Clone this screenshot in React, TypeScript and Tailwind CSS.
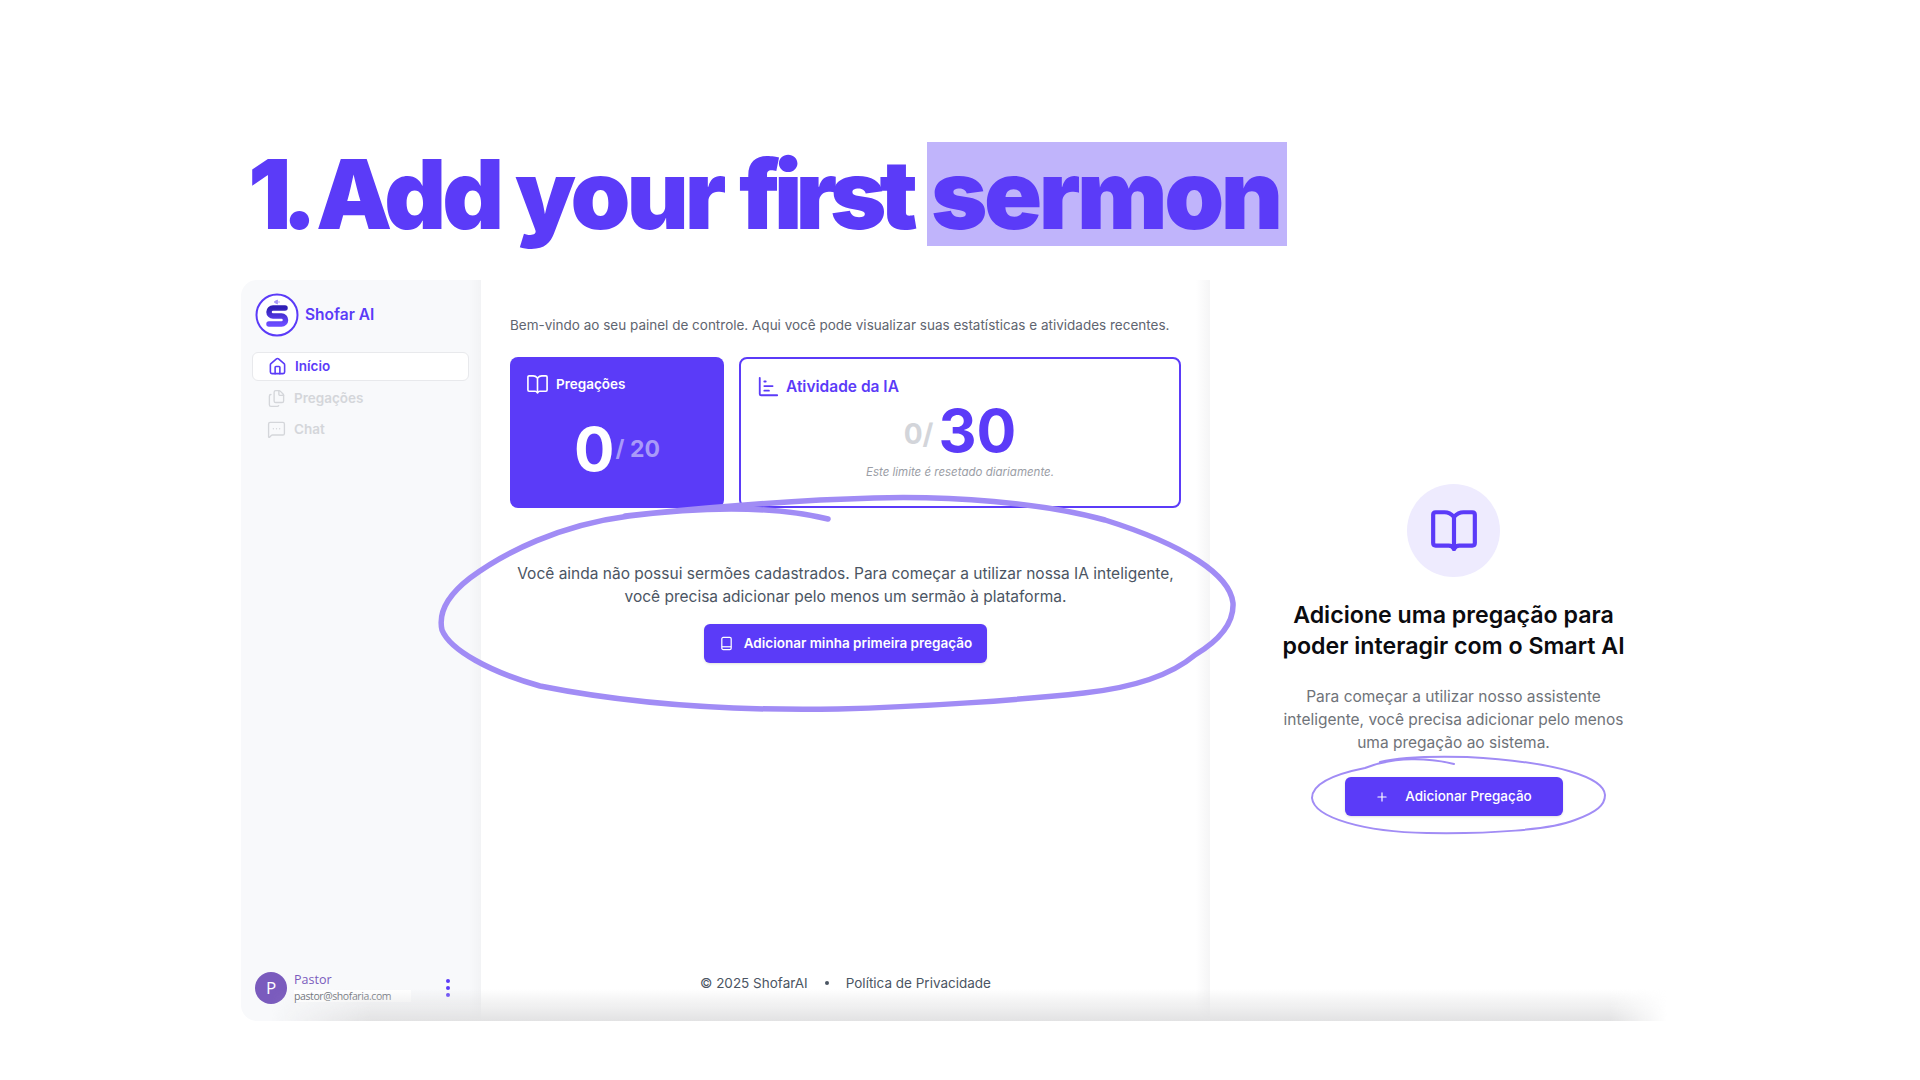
import React from 'react';
import { House, Files, MessageSquareMore, Plus } from 'lucide-react';

const BookIcon: React.FC<{ className?: string; strokeWidth?: number }> = ({ className, strokeWidth = 2 }) => (
  <svg viewBox="0 0 24 24" fill="none" stroke="currentColor" strokeWidth={strokeWidth} strokeLinejoin="round" strokeLinecap="round" className={className}>
    <path d="M12 5.2C10.8 3.9 9.2 3 7.5 3H3.2C2.5 3 2 3.5 2 4.2v13.6c0 .7.5 1.2 1.2 1.2h6.3c1 0 1.9.5 2.5 1.6.6-1.1 1.5-1.6 2.5-1.6h6.3c.7 0 1.2-.5 1.2-1.2V4.2C22 3.5 21.5 3 20.8 3h-4.3c-1.7 0-3.3.9-4.5 2.2Z" />
    <path d="M12 5.2V20.6" />
  </svg>
);

const ChartIcon: React.FC = () => (
  <svg viewBox="0 0 24 24" fill="none" stroke="currentColor" strokeWidth={2} strokeLinecap="round" strokeLinejoin="round" className="h-[22px] w-[22px]">
    <path d="M3 2v17.5A1.5 1.5 0 0 0 4.5 21H22" />
    <path d="M8 6h1.5M8 11h9M8 16h5" />
  </svg>
);

const Logo: React.FC = () => (
  <svg viewBox="0 0 44 44" className="h-[44px] w-[44px] shrink-0">
    <defs>
      <linearGradient id="logoS" x1="0" y1="0" x2="0" y2="1">
        <stop offset="0" stopColor="#2f1fb5" />
        <stop offset="1" stopColor="#6a4bff" />
      </linearGradient>
    </defs>
    <circle cx="22" cy="22" r="20.5" fill="#fff" stroke="#5b3bf8" strokeWidth="2" />
    <path d="M30 15H18a4 4 0 0 0 0 8h8.5a4 4 0 0 1 0 8H14" fill="none" stroke="url(#logoS)" strokeWidth="5.5" strokeLinecap="round" strokeLinejoin="round" />
    <path d="M19.5 8.5l3-1.5v4l-3-1.5zM24 8v2" fill="#a594f9" stroke="#a594f9" strokeWidth="0.8" />
  </svg>
);

const Sidebar: React.FC = () => (
  <aside className="relative flex w-[240px] shrink-0 flex-col rounded-l-2xl bg-[#f8f9fb] pl-[11px] pr-[12px] pt-[13px]">
    <div className="absolute bottom-0 right-0 top-0 w-[12px] bg-gradient-to-r from-transparent to-[#f2f3f5]" />
    <div className="relative flex items-center gap-[6px] pl-[3px]">
      <Logo />
      <span className="text-[15.5px] font-semibold text-[#5b3bf8]">Shofar AI</span>
    </div>
    <nav className="relative mt-[15px] flex flex-col text-[13.5px] font-semibold">
      <a className="flex h-[29px] items-center gap-[8px] rounded-md border border-[#e8e9ec] bg-white pl-[15px] text-[#5b3bf8]">
        <House className="h-[19px] w-[19px]" strokeWidth={2} />
        Início
      </a>
      <a className="mt-[3px] flex h-[29px] items-center gap-[8px] pl-[15px] text-[#d4d6da]">
        <Files className="h-[19px] w-[19px]" strokeWidth={1.7} />
        Pregações
      </a>
      <a className="mt-[2px] flex h-[29px] items-center gap-[8px] pl-[15px] text-[#d4d6da]">
        <MessageSquareMore className="h-[19px] w-[19px]" strokeWidth={1.7} />
        Chat
      </a>
    </nav>
    <div className="relative mt-auto flex items-center pb-[17px] pl-[3px]">
      <div className="flex h-[32px] w-[32px] shrink-0 items-center justify-center rounded-full bg-[#7a5bbd] font-['Open_Sans',sans-serif] text-[17px] text-white">
        P
      </div>
      <div className="ml-[7px] w-[117px] font-['Open_Sans',sans-serif] leading-none">
        <div className="text-[12.5px] text-[#7a5bbd]">Pastor</div>
        <div className="mt-[3px] bg-white py-[1px] text-[10.5px] tracking-[-0.4px] text-[#6b6f76]">pastor@shofaria.com</div>
      </div>
      <div className="ml-[35px] flex flex-col gap-[3px]">
        <span className="h-[4px] w-[4px] rounded-full bg-[#5b3bf8]" />
        <span className="h-[4px] w-[4px] rounded-full bg-[#5b3bf8]" />
        <span className="h-[4px] w-[4px] rounded-full bg-[#5b3bf8]" />
      </div>
    </div>
  </aside>
);

const MainPanel: React.FC = () => (
  <main className="relative flex w-[729px] shrink-0 flex-col pl-[29px] pr-[29px] pt-[36px]">
    <div className="absolute bottom-0 right-0 top-0 w-[14px] bg-gradient-to-r from-transparent to-[#f5f5f6]" />
    <p className="text-[13.5px] leading-[18px] text-[#5f6570]">
      Bem-vindo ao seu painel de controle. Aqui você pode visualizar suas estatísticas e atividades recentes.
    </p>
    <div className="mt-[23px] flex h-[151px] gap-[15px]">
      <div className="flex w-[214px] flex-col rounded-lg bg-[#5b3bf8] px-[16px] pt-[16px] text-white">
        <div className="flex items-center gap-[7px] text-[13.5px] font-semibold">
          <BookIcon className="h-[23px] w-[23px]" strokeWidth={1.7} />
          Pregações
        </div>
        <div className="mt-[17px] flex items-center justify-center">
          <span className="text-[60px] font-bold leading-[72px]">0</span>
          <span className="ml-[1px] text-[23px] font-bold text-[#a99af9]">/ 20</span>
        </div>
      </div>
      <div className="flex flex-1 flex-col rounded-lg border-2 border-[#5b3bf8] bg-white px-[16px] pt-[16px]">
        <div className="flex items-center gap-[7px] text-[15.5px] font-semibold text-[#5b3bf8]">
          <ChartIcon />
          Atividade da IA
        </div>
        <div className="flex items-center justify-center">
          <span className="mt-[6px] text-[28px] font-bold leading-[32px] text-[#d3d5da]">0/</span>
          <span className="ml-[5px] text-[59px] font-bold leading-[66px] text-[#5b3bf8]">30</span>
        </div>
        <p className="text-center text-[11.5px] italic leading-[16px] text-[#9b9ea6]">Este limite é resetado diariamente.</p>
      </div>
    </div>
    <div className="mt-[54px] flex flex-col items-center">
      <p className="text-center text-[15.5px] leading-[23px] text-[#4b5563]">
        Você ainda não possui sermões cadastrados. Para começar a utilizar nossa IA inteligente,
        <br />
        você precisa adicionar pelo menos um sermão à plataforma.
      </p>
      <button className="mt-[16px] flex h-[39px] w-[283px] items-center justify-center gap-[10px] rounded-md bg-[#5b3bf8] text-[13.5px] font-semibold text-white shadow-sm">
        <svg viewBox="0 0 16 16" fill="none" stroke="currentColor" strokeWidth={1.3} className="h-[15px] w-[15px]">
          <rect x="3" y="1.5" width="10" height="13" rx="1.5" />
          <path d="M3 11.5h10" />
        </svg>
        Adicionar minha primeira pregação
      </button>
    </div>
    <footer className="mt-auto flex items-center justify-center pb-[29px] text-[13.5px] leading-[18px] text-[#4b5563]">
      <span>© 2025 ShofarAI</span>
      <span className="mx-[17px] h-[4px] w-[4px] rounded-full bg-[#4b5563]" />
      <span>Política de Privacidade</span>
    </footer>
  </main>
);

const RightPanel: React.FC = () => (
  <section className="flex w-[457px] shrink-0 flex-col items-center pl-[30px] pt-[204px]">
    <div className="flex h-[93px] w-[93px] items-center justify-center rounded-full bg-[#eeebfe] text-[#5b3bf8]">
      <BookIcon className="h-[50px] w-[50px]" strokeWidth={2} />
    </div>
    <h2 className="mt-[23px] text-center text-[23.2px] font-semibold leading-[31px] text-[#0b0b0f]">
      Adicione uma pregação para
      <br />
      poder interagir com o Smart AI
    </h2>
    <p className="mt-[23px] text-center text-[15.5px] leading-[23px] text-[#6f7379]">
      Para começar a utilizar nosso assistente
      <br />
      inteligente, você precisa adicionar pelo menos
      <br />
      uma pregação ao sistema.
    </p>
    <button className="mt-[23px] flex h-[39px] w-[218px] items-center justify-center gap-[16px] rounded-md bg-[#5b3bf8] text-[13.5px] font-medium text-white shadow-sm">
      <Plus className="h-[14px] w-[14px]" strokeWidth={2} />
      Adicionar Pregação
    </button>
  </section>
);

const Scribbles: React.FC = () => (
  <svg viewBox="0 0 1920 1080" fill="none" stroke="#a18cf5" strokeLinecap="round" className="pointer-events-none absolute left-0 top-0 h-[1080px] w-[1920px]">
    <path
      strokeWidth="5.5"
      d="M828 519C770 505 700 507 629 516C560 525 505 552 470 578C448 595 438 612 442 630C450 650 490 672 540 686C630 704 730 711 838 709C920 707 1020 700 1084 693C1130 688 1170 676 1195 655C1220 640 1234 622 1233 603C1230 575 1185 545 1105 520C1040 502 950 496 874 498C800 500 700 508 625 516"
    />
    <path
      strokeWidth="2"
      d="M1454 764C1430 758 1395 756 1365 768C1330 775 1312 785 1312 798C1314 818 1365 832 1427 833C1490 834 1550 830 1575 820C1597 812 1605 805 1605 795C1604 778 1560 762 1467 757C1430 756 1400 757 1380 762"
    />
  </svg>
);

export default function App() {
  return (
    <div className="relative h-[1080px] w-[1920px] overflow-hidden bg-white font-['Inter',sans-serif]">
      <div className="pl-[248px] pt-[142px]">
        <h1 className="flex h-[138px] items-start text-[96px] font-black leading-[104px] text-[#5b3bf8]">
          <span className="w-[68px] tracking-[-10px]">1.</span>
          <span className="w-[199px] tracking-[-4px]">Add</span>
          <span className="w-[224px] tracking-[-4px]">your</span>
          <span className="w-[188px] tracking-[-7px]">first</span>
          <span className="h-[104px] w-[360px] bg-[#c0b4fb] pl-[4px] tracking-[-3.4px]">sermon</span>
        </h1>
      </div>
      <div className="relative ml-[241px] flex h-[741px] w-[1426px]">
        <Sidebar />
        <MainPanel />
        <RightPanel />
        <div className="pointer-events-none absolute bottom-0 left-0 right-0 h-[32px] bg-gradient-to-t from-[#e2e2e3] to-transparent [mask-image:linear-gradient(to_right,transparent_30px,black_130px,black_96%,transparent)]" />
      </div>
      <Scribbles />
    </div>
  );
}
